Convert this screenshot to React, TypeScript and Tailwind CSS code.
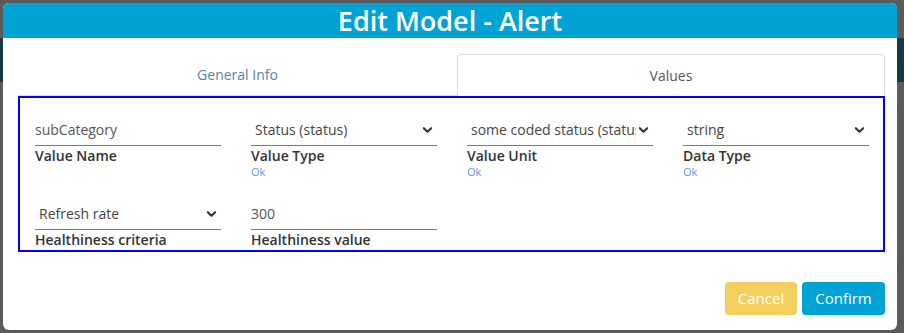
import React from 'react';

const Chevron: React.FC = () => (
    <svg viewBox="0 0 12 8" className="w-[11px] h-[8px] shrink-0" fill="none" stroke="#333" strokeWidth={2.2} strokeLinecap="round" strokeLinejoin="round">
        <path d="M2 2l4 4 4-4" />
    </svg>
);

type Field = { value: string; label: string; select?: boolean; ok?: boolean };

const FieldBox: React.FC<{ field: Field }> = ({ field }) => (
    <div className="flex flex-col">
        <div className="h-[34px] flex items-end border-b-[1.5px] border-[#1b9bc2] pb-[5px]">
            {field.select ? (
                <div className="flex-1 flex items-center pl-[4px] pr-[4px] min-w-0 gap-[2px]">
                    <span className="flex-1 overflow-hidden whitespace-nowrap text-[14px] text-[#444]">{field.value}</span>
                    <Chevron />
                </div>
            ) : (
                <span className="text-[14px] text-[#555]">{field.value}</span>
            )}
        </div>
        <span className="text-[14px] leading-[17px] font-semibold text-[#333] mt-px">{field.label}</span>
        {field.ok && <span className="text-[11px] leading-[16px] text-[#5b9bd5]">Ok</span>}
    </div>
);

const rowOne: Field[] = [
    { value: 'subCategory', label: 'Value Name' },
    { value: 'Status (status)', label: 'Value Type', select: true, ok: true },
    { value: 'some coded status (status)', label: 'Value Unit', select: true, ok: true },
    { value: 'string', label: 'Data Type', select: true, ok: true },
];

const rowTwo: Field[] = [
    { value: 'Refresh rate', label: 'Healthiness criteria', select: true },
    { value: '300', label: 'Healthiness value' },
];

const App: React.FC = () => {
    return (
        <div className="relative w-[904px] h-[333px] bg-[#5b5b5b] overflow-hidden" style={{ fontFamily: '"Open Sans", sans-serif' }}>
            {/* page behind the backdrop */}
            <div className="absolute left-0 right-0 top-[38px] h-[44px] bg-[#173b45]" />

            <div className="absolute left-[3px] top-[3px] w-[894px] h-[327px] bg-white rounded-[6px] overflow-hidden flex flex-col">
                <div className="h-[35px] bg-[#00a3d3] flex items-center justify-center">
                    <h1 className="text-[27px] font-semibold text-white leading-none">Edit Model - Alert</h1>
                </div>

                <div className="pl-[15px] pr-[12px] pt-[16px]">
                    <div className="flex h-[42px] border-b border-[#dddddd]">
                        <div className="w-[439px] flex items-center justify-center text-[14px] text-[#5a7fae]">General Info</div>
                        <div className="flex-1 -mb-px bg-white border border-b-0 border-[#dddddd] rounded-t-[4px] flex items-center justify-center text-[14px] text-[#555]">Values</div>
                    </div>

                    <div className="border-2 border-[#0000ff] pt-[14px] pb-[2px] pl-[15px]">
                        <div className="grid grid-cols-4 gap-x-[30px] w-[834px]">
                            {rowOne.map((f) => (
                                <FieldBox key={f.label} field={f} />
                            ))}
                        </div>
                        <div className="grid grid-cols-4 gap-x-[30px] w-[834px] mt-[16px]">
                            {rowTwo.map((f) => (
                                <FieldBox key={f.label} field={f} />
                            ))}
                        </div>
                    </div>
                </div>

                <div className="flex justify-end gap-[5px] px-[12px] mt-[30px]">
                    <button className="w-[72px] h-[33px] rounded-[4px] bg-[#f3d05e] text-white text-[15px]">Cancel</button>
                    <button className="w-[83px] h-[33px] rounded-[4px] bg-[#00a3d3] text-white text-[15px]">Confirm</button>
                </div>
            </div>
        </div>
    );
};

export default App;
